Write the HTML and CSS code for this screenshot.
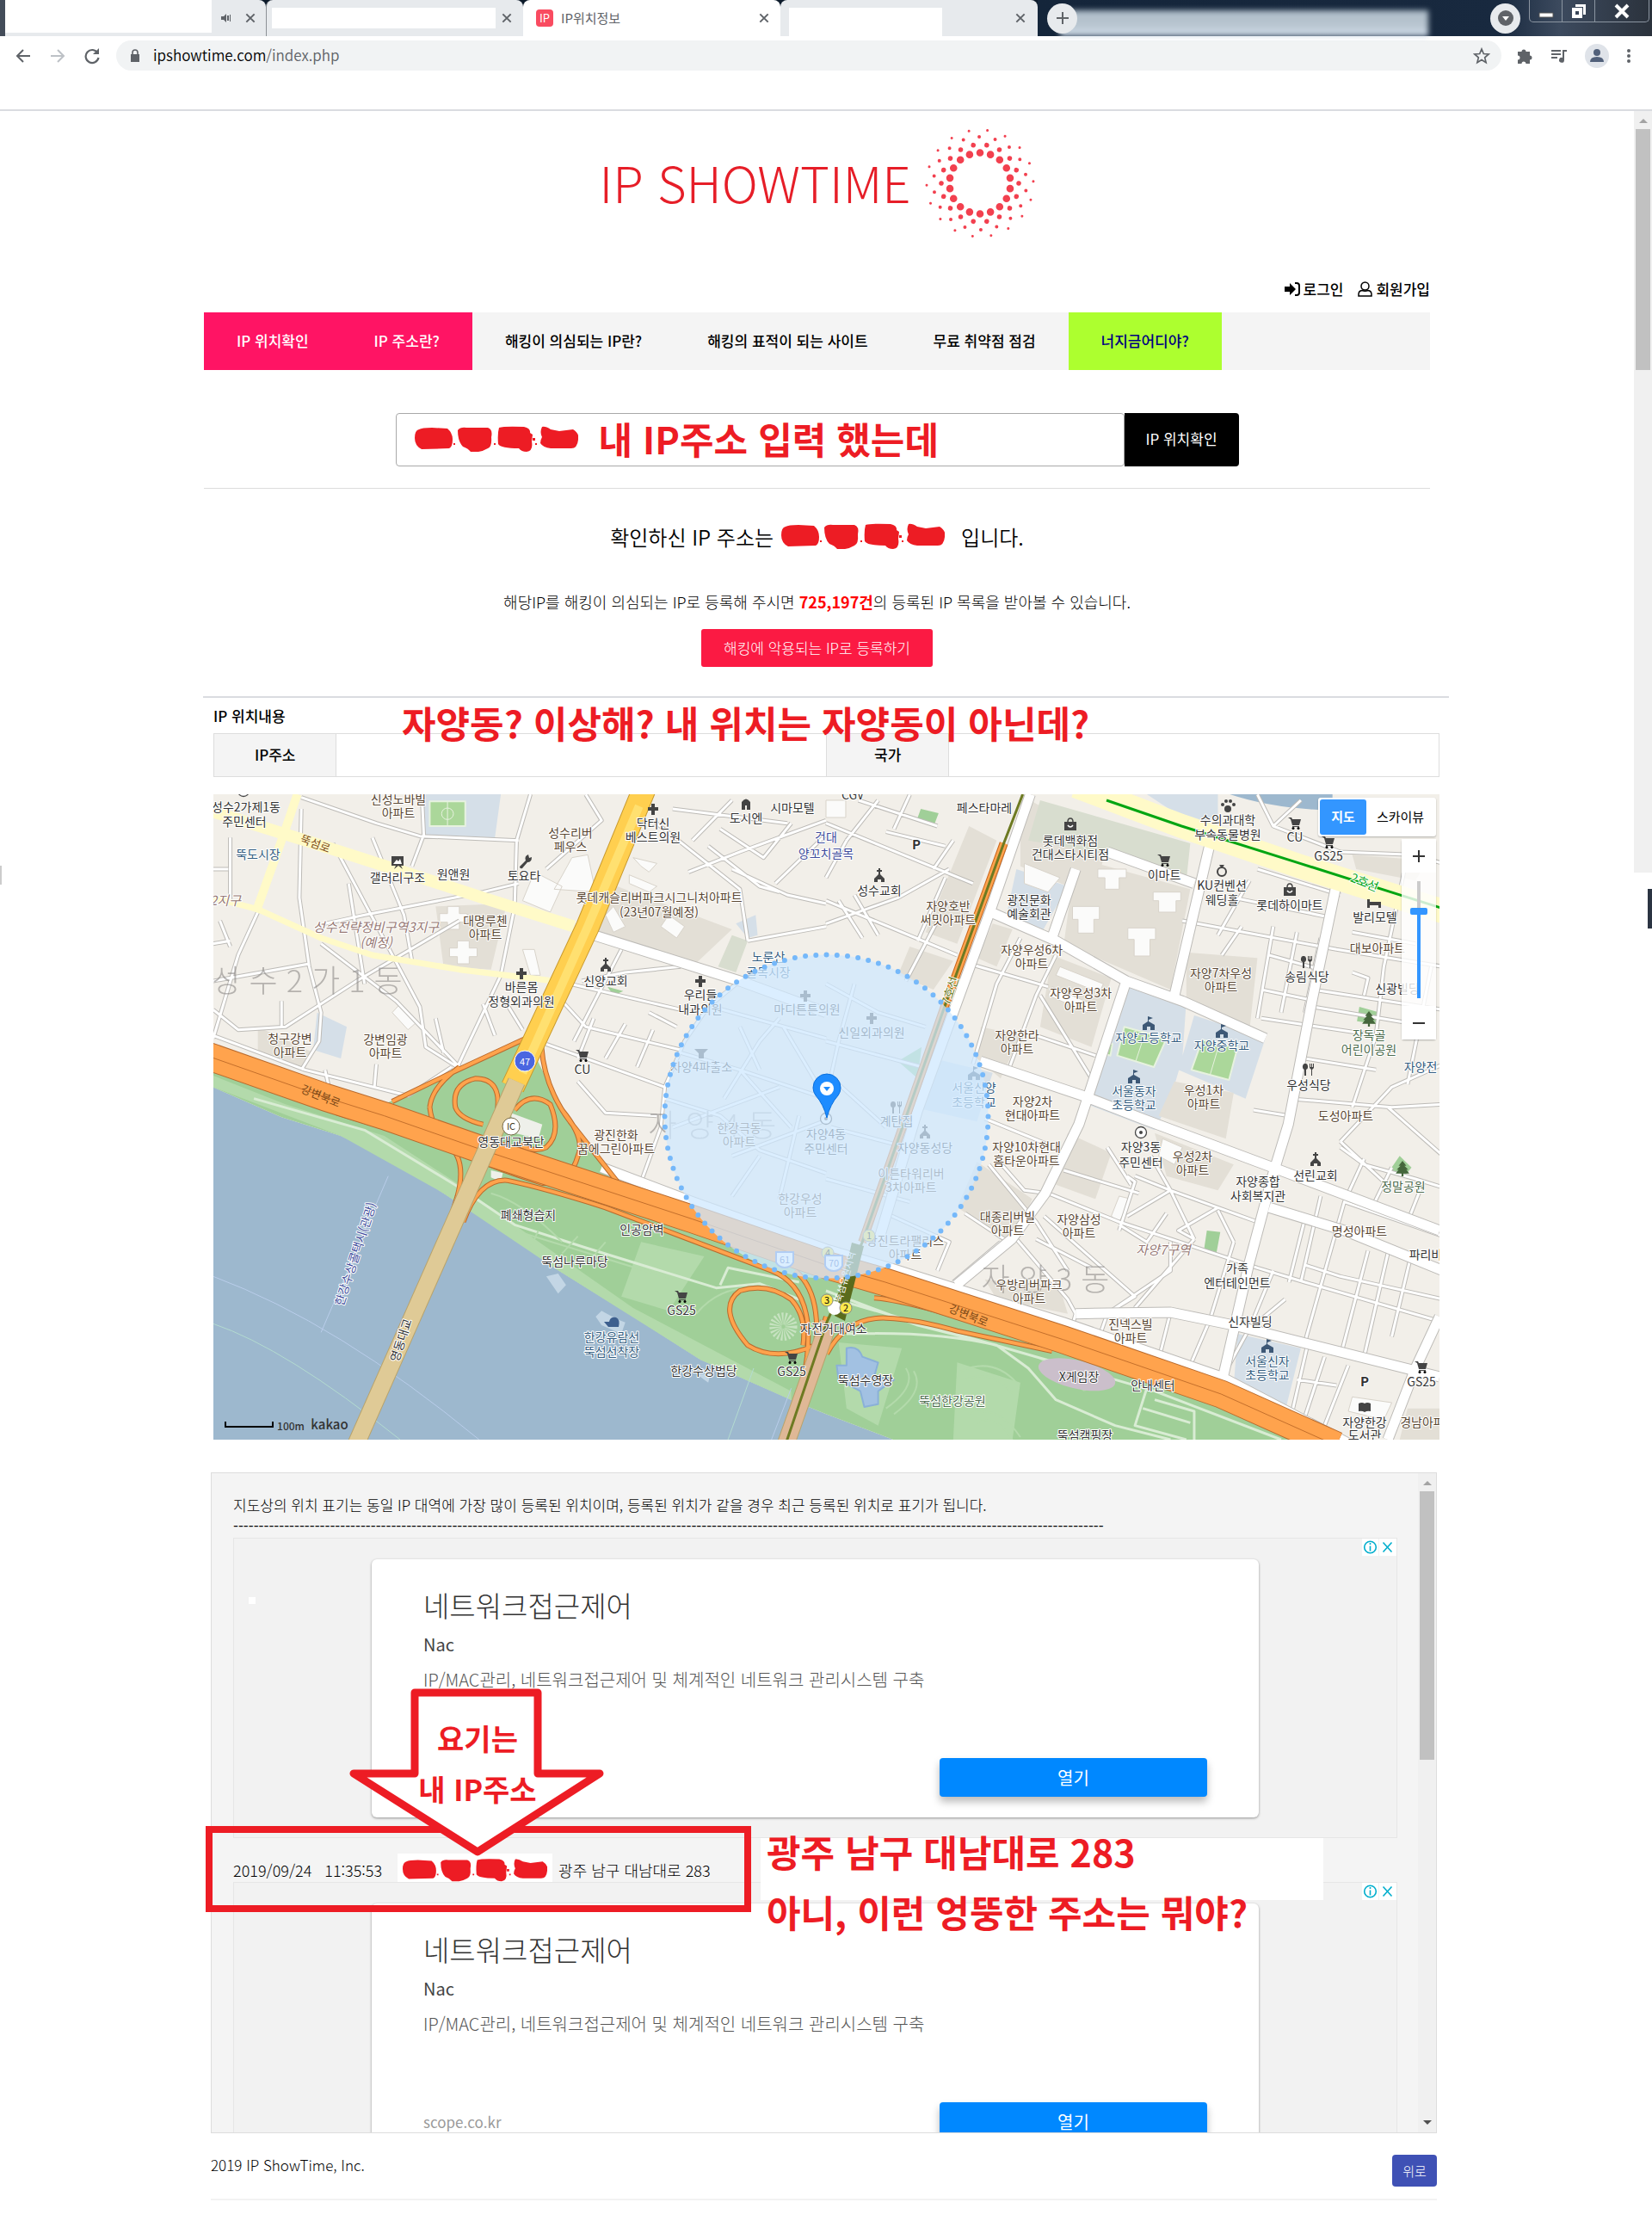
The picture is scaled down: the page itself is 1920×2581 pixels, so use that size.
FILE: index.html
```html
<!DOCTYPE html>
<html lang="ko">
<head>
<meta charset="utf-8">
<title>IP위치정보</title>
<link rel="stylesheet" href="styles.css">
</head>
<body>
<svg class="sprite" aria-hidden="true">
  <defs>
    <symbol id="close" viewBox="0 0 12 12"><path d="M2 2l8 8M10 2l-8 8" stroke="currentColor" stroke-width="1.7" fill="none"/></symbol>
    <symbol id="scribble" viewBox="0 0 190 30">
      <g fill="#ed1c24"><path d="M5 4Q8 2 20 2L38 3Q44 8 44 16T40 26L8 27Q0 23 0 14T5 4z"/><path d="M50 5Q53 1 60 2L85 2Q91 4 89 13Q90 24 85 26Q80 29 74 30L65 30Q62 26 56 24Q50 18 50 5z"/><path d="M98 2Q104 0 127 1Q135 3 134 8L137 10L136 18Q138 29 130 30Q124 30 121 26Q100 26 97 21Q96 9 98 2z"/><path d="M148 1Q152 0 158 4L168 6L184 4Q192 9 190 16Q189 26 182 26L158 26Q149 25 146 20Q146 16 148 13Q145 7 148 1z"/>
      <path d="M45 20h2v2h-2zM92 20h2v2h-2zM140 20h2v2h-2zM137 14h3v3h-3z"/></g>
    </symbol>
    <symbol id="adchoices" viewBox="0 0 40 20"><path fill="#fff" d="M0 0h19v20H0zM20 0h20v20H20z"/><g fill="none" stroke="#00aecd" stroke-width="1.6"><circle cx="9.500" cy="10" r="6.800"/><path d="M9.500 8.500v6M9.500 5v2M24.500 4.500l10 11M34.500 4.500l-10 11"/></g></symbol>
    <symbol id="m-plus" viewBox="-8 -8 16 16"><path d="M-2-6h4v4h4v4h-4v5h-4v-5h-4v-4h4z" fill="currentColor"/></symbol>
    <symbol id="m-cart" viewBox="-8 -8 16 16"><path d="M-8-6h4l1 2h10l-2 7h-8l-2-7zM-3 4h8v1h-8z" fill="currentColor"/><circle cx="-2" cy="6.500" r="1.500"/><circle cx="4" cy="6.500" r="1.500"/></symbol>
    <symbol id="m-church" viewBox="-8 -8 16 16"><path d="M-1-8h2v2h2v2h-2v3l5 5v4h-4v-3h-4v3h-4v-4l5-5v-3h-2v-2h2z" fill="currentColor"/></symbol>
    <symbol id="m-school" viewBox="-8 -8 16 16"><path d="M-1-8l6 2-5 2v2l7 4v6h-5v-4h-4v4h-5v-6l6-4z" fill="currentColor"/></symbol>
    <symbol id="m-tree" viewBox="-8 -8 16 16"><path d="M0-8l4 5h-2l4 4h-2l3 4h-6v3h-2v-3h-6l3-4h-2l4-4h-2z" fill="currentColor"/></symbol>
    <symbol id="m-fork" viewBox="-8 -8 16 16"><path d="M-4-7a2.500 3.500 0 0 1 1 7v7h-2v-7a2.500 3.500 0 0 1 1-7zM1-7h1v4h1v-4h1v4h1v-4h1v5l-2 2v7h-1v-7l-2-2z" fill="currentColor"/></symbol>
    <symbol id="m-bag" viewBox="-8 -8 16 16"><path d="M-7-3h14v10h-14z" fill="currentColor"/><path d="M-3-3q0-4 3-4t3 4" fill="none" stroke="currentColor" stroke-width="1.500"/><path d="M-3 1q3 4 6 0" stroke="#fff" fill="none" stroke-width="1.500"/></symbol>
    <symbol id="m-office" viewBox="-8 -8 16 16"><circle r="6.500" fill="#fff" stroke="currentColor" stroke-width="1.300"/><circle r="2" fill="currentColor"/></symbol>

    <g id="minor-roads">
      <path d="M17 300H55M60 190V410M240 90L235 400 260 640 290 800 285 900 240 1000M240 50L430 140 540 185 790 200M545 39L550 180 520 290M820 39L785 200 780 430 745 670 635 990M320 210L440 520 540 780 555 920 635 990M420 190L500 460 520 620M300 490L400 460 700 380 790 350M130 450L80 600 17 890M17 690L260 630M17 790L80 860 200 850 380 690 640 480M290 560L480 760 640 990M360 350L400 700M190 850L190 760M17 880L250 1000 510 1090 620 990M300 1000L310 1060M430 980L425 1060M860 910L1160 1060M880 730L960 850 1200 930M1050 580L930 900M920 700L1200 790M1350 690L1270 780 1210 900 1160 1060 1150 1200 1100 1390M950 690L1060 660 1200 640M1130 130L1350 370 1370 550M1220 310L1350 240 1568 130M1330 300L1470 390 1568 420M1370 550L1568 500M1440 350L1568 180M960 40L1000 130 860 300M1180 90L1470 140M1230 200L1330 60M1300 160L1410 260 1480 140M1270 220L1400 360 1450 380M940 1040L1010 1150 1140 1160M700 770L730 880M760 770L800 860M580 820L600 940M980 820L940 960M1060 840L1010 960M1130 860L1090 990M1120 800L1190 850M34 480L60 570M17 560L60 550"/>
      <path d="M1620 200L1700 60M1568 140L1940 350M1568 330L1620 200M1568 410L1900 600M1568 490L1750 400 1880 300M1640 390L1700 530M1600 410L1660 540M1800 550L1870 330M1770 690L1850 480M1720 170L1870 220M1840 300L1890 200M1650 60L1850 150M1780 40L1740 160M1930 630L2130 710M2060 540L2000 700 1940 980M2150 600L2100 740 2030 1000M2110 740L2240 1030M2100 880L2250 950M2470 480L2860 580M2640 340L2560 530M2660 300L2870 390M2620 500L2570 600M2700 500L2660 820M2760 520L2720 800M2820 540L2780 800M2600 400L2850 470M2690 600L2820 650M2670 720L2810 760M2670 820L2960 880M2800 780L3100 850M2870 240L3050 250 3130 280M2870 240L2700 150 2660 40M2700 150L2770 60M2860 580L3130 640M2900 520L3060 560M2900 660L2940 680 2930 740M3040 250L2980 640 2960 880 2900 1130M3100 640L3040 1050M2800 720L3130 790M2780 960L2960 1000"/>
      <path d="M2740 1100L3000 1130 3130 1120M2870 1270L2930 1330 3060 1380 3130 1410M2870 1250L3000 1060 3130 980M2870 1250L2980 1390M2990 1130L3130 1300M2740 1160L2650 1140M1970 1170L2130 1260M2000 1310L2070 1420 2130 1430M2170 1350L2360 1430M2330 1370L2350 1390 2310 1560M2350 1370L2440 1420 2560 1480 2660 1530M2390 1300L2440 1420 2500 1590M2330 1510L2440 1420M2310 1540L2380 1600 2430 1500M2500 1590L2460 1560 2560 1480M2050 1590L2180 1800 2200 1850M2120 1510L2350 1790 2290 1840 2200 1850M2100 1590L2240 1690M2200 1850L2290 1840 2440 1700 2440 1600M2500 1590L2350 1830M2280 1850L2260 1930M2440 1845L2410 2010M2540 1870L2490 2030M2600 1600L2540 1870 2700 1920M2200 1850L2190 1900M2130 1430L2310 1530 2660 1690 2780 1740M2560 1490L2600 1600M2700 1700L2640 1900 2560 2100M2780 1520L2740 1740M2820 1440L2770 1740M2880 1460L2780 1950M2940 1630L2870 2000M2990 1640L2930 2000M3050 1640L3000 1930M2780 1680L2870 1720 3130 1800M2780 1740L3130 1880M2660 1880L2730 1800M2790 1940L2750 2180M2830 2000L2780 2210M2890 2030L2830 2240M2760 2080L2860 2100M1980 1330L2100 1530 2180 1700M1720 1500L1880 1600 1850 1700M2280 1270L2340 1400M2010 1600L1890 1740M1920 1500L2030 1600M2930 1310L2880 1460 3130 1580M3000 1340L2950 1480M3080 1390L3040 1530"/>
      <path d="M1200 940L1350 1000 1568 1100M1280 780L1568 890M1310 1100L1400 900 1450 820M1160 1100L1300 1160 1400 1280 1568 1360M1180 1200L1450 1060M1400 1300L1330 1440M1500 1160L1450 1450M1350 1000L1480 1200M1350 850L1400 1000M1460 850L1568 1100M1330 1300L1560 1180M1568 700L1700 800 1820 850M1640 700L1600 900 1568 1100M1568 900L1840 1000M1580 1200L1800 1280M1600 1050L1720 1200M1568 1380L1780 1460"/>
    </g>
    <g id="main-roads">
      <path d="M980 530L1350 690 1568 800M2085 39L1985 440 1890 800 1800 1140 1700 1600M1985 450L2150 550 2328 690 2470 760 2680 890M2540 210L2450 740M1958 970L2218 1090 2368 1170 2718 1350 3121 1560M2328 690L2208 1190 2123 1430 2038 1590 1898 1750M2868 300L2798 760 2738 1190 2698 1370 2638 1680 2568 2100M1000 1340L1230 1460 1568 1625 1728 1690 2168 1880 2568 2070 2888 2300M2200 1850L2440 1845 2600 1890 3121 2070M3121 1860L3060 2040 2990 2289M2140 540L2200 300M2280 240L2500 350M2690 1480L2880 1560 3130 1700"/>
    </g>
    <g id="expressway"><path d="M0 950L300 1095 450 1160 700 1280 1230 1520 1568 1680 1718 1740 2168 1940 2568 2130 2860 2310"/></g>
    <g id="ramps"><path d="M808 890L620 1010 470 1110M848 920Q855 1060 920 1180L1040 1390M735 1150Q750 1030 680 1030Q620 1050 630 1130Q640 1170 700 1190M565 1130Q570 1060 640 990M565 1130Q570 1200 610 1260Q660 1310 635 1440L615 1530M780 1140Q820 1070 870 1120Q900 1220 860 1270Q830 1290 790 1260M900 1140Q960 1240 940 1300Q920 1400 850 1395Q700 1330 640 1280L330 1150M650 1530Q690 1380 760 1385Q850 1410 1010 1480L1430 1700Q1540 1760 1520 2000L1500 2200M1490 1700Q1560 1780 1540 1990L1568 1860M1540 1960Q1440 2020 1370 1960Q1290 1830 1350 1770Q1420 1740 1480 1800Q1520 1860 1510 1960M1570 1990Q1620 1860 1720 1865Q1800 1870 1900 1910L2140 1980M1690 1795Q1740 1800 1850 1840L2140 1960"/></g>
  </defs>
</svg>

<header class="browser">
  <div class="tabs">
    <div class="tab tab-first"><span class="blank"></span>
      <svg width="14" height="14" viewBox="0 0 14 14" fill="#5f6368"><path d="M1 5h3l3-3v10L4 9H1zM8 4h2v6H8zM11 3h1v8h-1z"/></svg>
      <svg class="x" width="14" height="14"><use href="#close"/></svg></div>
    <div class="tab tab-second"><span class="blank"></span><svg class="x" width="14" height="14"><use href="#close"/></svg></div>
    <div class="tab tab-active"><span class="favicon">IP</span><span class="tab-title">IP위치정보</span><svg class="x" width="14" height="14"><use href="#close"/></svg></div>
    <div class="tab tab-last"><span class="blank"></span><svg class="x" width="14" height="14"><use href="#close"/></svg></div>
    <div class="glass">
      <button class="round" aria-label="새 탭"><svg width="16" height="16" viewBox="0 0 16 16"><path d="M8 1v14M1 8h14" stroke="#5f6368" stroke-width="2"/></svg></button>
      <span class="glow"></span>
      <button class="round" aria-label="탭 검색"><svg width="18" height="18" viewBox="0 0 18 18"><circle cx="9" cy="9" r="9" fill="#5f6368"/><path d="M5 7h8l-4 5z" fill="#fff"/></svg></button>
      <div class="window-buttons">
        <button aria-label="최소화"><svg width="20" height="20" viewBox="0 0 20 20"><path d="M2 12h16v5H2z" fill="#fff" stroke="#555"/></svg></button>
        <button aria-label="이전 크기로"><svg width="20" height="20" viewBox="0 0 20 20"><path d="M6 2h12v12h-3V5H6zM2 6h12v12H2zm4 4v4h4v-4z" fill="#fff" fill-rule="evenodd"/></svg></button>
        <button aria-label="닫기"><svg width="20" height="20" viewBox="0 0 20 20"><path d="M3 3l14 14M17 3L3 17" stroke="#fff" stroke-width="4"/></svg></button>
      </div>
    </div>
  </div>
  <div class="toolbar">
    <svg width="20" height="20" viewBox="0 0 20 20" fill="none" stroke="#5f6368" stroke-width="2"><path d="M18 10H3M10 3l-7 7 7 7"/></svg>
    <svg width="20" height="20" viewBox="0 0 20 20" fill="none" stroke="#bdc1c6" stroke-width="2"><path d="M2 10h15M10 3l7 7-7 7"/></svg>
    <svg width="20" height="20" viewBox="0 0 20 20" fill="none" stroke="#5f6368" stroke-width="2.200"><path d="M16.500 6.500A7.500 7.500 0 1 0 17.500 12"/><path d="M18 1v7h-7z" fill="#5f6368" stroke="none"/></svg>
    <div class="omnibox">
      <svg width="12" height="16" viewBox="0 0 12 16"><path d="M1 6h10v9H1z" fill="#5f6368"/><path d="M3 7V4a3 3 0 0 1 6 0v3" fill="none" stroke="#5f6368" stroke-width="1.600"/></svg>
      <span class="url">ipshowtime.com<span>/index.php</span></span>
      <svg width="20" height="20" viewBox="0 0 20 20"><path d="M10 2l2.300 5.500 5.900.5-4.500 3.900 1.400 5.800L10 14.600l-5.100 3.100 1.400-5.800L1.800 8l5.900-.5z" fill="none" stroke="#5f6368" stroke-width="1.700"/></svg>
    </div>
    <svg width="20" height="20" viewBox="0 0 20 20" fill="#5f6368"><path d="M2 5h4.500a2.500 2.500 0 1 1 5 0H16v4.500a2.500 2.500 0 1 1 0 5V19h-4.500a2.500 2.500 0 0 0-5 0H2v-4.500a2.500 2.500 0 0 0 0-5z"/></svg>
    <svg width="20" height="20" viewBox="0 0 20 20" fill="#5f6368"><path d="M1 3h11v2H1zM1 7h11v2H1zM1 11h7v2H1zM14 3h5v2h-3v10a3 3 0 1 1-2-3z"/></svg>
    <svg width="28" height="28" viewBox="0 0 28 28"><circle cx="14" cy="14" r="14" fill="#dfe3e9"/><circle cx="14" cy="10" r="4" fill="#51607a"/><path d="M6 21q0-6 8-6t8 6z" fill="#51607a"/></svg>
    <svg width="6" height="18" viewBox="0 0 6 18" fill="#5f6368"><circle cx="3" cy="3" r="2"/><circle cx="3" cy="9" r="2"/><circle cx="3" cy="15" r="2"/></svg>
  </div>
</header>

<div class="viewport">
<main class="page">
  <h1 class="logo"><span>IP SHOWTIME</span>
    <svg width="128" height="128" viewBox="-64 -64 128 128" fill="none" stroke="#f2404f" stroke-linecap="round" aria-hidden="true">
      <circle r="35.500" pathLength="180" stroke-width="8.600" stroke-dasharray="0 10" transform="rotate(-90)"/>
      <circle r="45" pathLength="180" stroke-width="5.600" stroke-dasharray="0 10" transform="rotate(-80)"/>
      <circle r="54" pathLength="180" stroke-width="4" stroke-dasharray="0 10" transform="rotate(-91)"/>
      <circle r="62" pathLength="180" stroke-width="3" stroke-dasharray="0 10" transform="rotate(-82)"/>
    </svg>
  </h1>
  <div class="account">
    <a href="#"><svg width="18" height="16" viewBox="0 0 18 16"><path d="M0 5h6V1l7 7-7 7v-4H0z"/><path d="M12 1h2q3 0 3 3v8q0 3-3 3h-2" fill="none" stroke="#000" stroke-width="2"/></svg>로그인</a>
    <a href="#"><svg width="17" height="18" viewBox="0 0 17 18" fill="none" stroke="#000" stroke-width="1.500"><circle cx="8.500" cy="5.500" r="4.500"/><path d="M1 17v-2q0-4 4-4.500 3.500 1.500 7 0 4 .5 4 4.500v2z"/></svg>회원가입</a>
  </div>
  <nav class="menu">
    <a class="pink" href="#">IP 위치확인</a><a class="pink" href="#">IP 주소란?</a><a href="#">해킹이 의심되는 IP란?</a><a href="#">해킹의 표적이 되는 사이트</a><a href="#">무료 취약점 점검</a><a class="green" href="#">너지금어디야?</a>
  </nav>
  <form class="search">
    <input type="text" aria-label="IP 주소">
    <button type="button">IP 위치확인</button>
    <div class="search-note"><svg class="scribble"><use href="#scribble"/></svg><span class="note">내 IP주소 입력 했는데</span></div>
  </form>
  <section class="result">
    <h2>확인하신 IP 주소는 <svg class="scribble"><use href="#scribble"/></svg> 입니다.</h2>
    <p>해당IP를 해킹이 의심되는 IP로 등록해 주시면 <strong>725,197건</strong>의 등록된 IP 목록을 받아볼 수 있습니다.</p>
    <button type="button">해킹에 악용되는 IP로 등록하기</button>
  </section>
  <section class="location">
    <h3>IP 위치내용</h3>
    <span class="note location-note">자양동? 이상해? 내 위치는 자양동이 아닌데?</span>
    <table><tr><th scope="row">IP주소</th><td></td><th scope="row">국가</th><td></td></tr></table>
    <div class="map">
      <svg class="map-art" viewBox="0 0 1425 750" role="img" aria-label="자양동 지도">
        <rect width="1425" height="750" fill="#f2efe9"/>
        <g class="geo" transform="translate(-8 -13) scale(.45918 .33333)">
          <path fill="#d5dfe8" d="M545 39H745L730 190 550 180zM2380 39L2560 39 2560 130 2480 130zM2050 300L2180 360 2110 530 2020 490zM2320 700L2480 760 2470 960 2440 1100 2400 1210 2230 1120zM2500 810L2680 890 2630 1100 2460 1000zM2610 1920L2770 1970 2730 2190 2600 2100zM280 800L355 850 340 960 270 930zM1340 490L1390 460 1395 530 1370 540zM1840 960L1990 1010 1950 1180 1790 1130z"/>
          <path fill="#9db8ce" d="M2590 39H2850V95Q2700 90 2590 39z"/>
          <path fill="#e3dfd6" d="M1000 340L1330 510 1230 640 990 530zM580 430L760 420 720 650 600 640zM130 850L270 940 240 1000 130 940zM2200 260L2490 370 2440 720 2170 560zM1930 150L2000 200 1900 560 1820 520zM2140 600L2290 680 2240 920 2110 850zM2480 590L2660 610 2640 860 2480 780zM2450 1040L2600 1080 2580 1240 2410 1160zM2180 1220L2290 1290 2250 1450 2150 1400zM1950 1320L2090 1450 2040 1600 1900 1480zM2400 1220L2600 1330 2560 1420 2430 1370zM1970 1730L2160 1760 2180 1850 2000 1800zM1960 850L2060 880 2010 1030 1950 960zM2900 250L3090 270 3060 340 2910 300zM3040 2180H3130V2289H3020zM1990 490L2040 510 2000 640 1950 610zM1780 570L1890 620 1840 720 1750 670zM2060 39L2110 80 2290 150 2260 320 2180 360 2060 290z"/>
          <path fill="#d8ddcf" d="M2110 60L2490 210 2480 340 2290 250 2080 200zM1330 530L1370 550 1340 660 1295 640z"/>
          <path fill="#fbfbfa" stroke="#d8d3ca" stroke-width="1" vector-effect="non-scaling-stroke" d="M2256 300h72v30h-18v40h-36v-40h-18zM2396 380h70v30h-12v40h-44v-40h-14zM2192 430h68v45h-14v48h-40v-48h-14zM2332 505h70v40h-14v58h-40v-58h-16zM925 260L965 250 985 380 880 370 895 335zM830 310L900 360 870 450 800 410zM490 770L535 830 510 860 470 800zM1080 260L1140 280 1120 310 1100 290zM1070 320L1140 360 1120 380 1070 350zM800 580L830 580 845 670 820 670zM2070 280L2160 330 2130 380 2070 350zM1568 60h50v60h-50zM2900 2140L3000 2160 2980 2220 2890 2190zM610 430h30v25h20v30h-20v25h-30v-25h-20v-30h20zM635 550h30v25h20v30h-20v25h-30v-25h-20v-30h20zM1170 460L1210 500 1190 540 1150 500zM1030 430L1060 500 1030 520 1010 460zM2160 640L2270 700 2260 730 2150 670zM2140 710L2240 770 2230 800 2130 740zM2420 1240L2470 1270 2450 1330 2410 1300zM2310 1440L2340 1450 2310 1530 2290 1510z"/>
          <path fill="#abd79a" stroke="#e7f2df" stroke-width="2" vector-effect="non-scaling-stroke" d="M565 64H655V150H565zM2323 850L2430 890 2398 990 2305 950zM2520 895L2610 920 2588 1035 2493 1000zM2278 905l15 5-5 40-13-5z"/>
          <path fill="none" stroke="#e7f2df" stroke-width="1" vector-effect="non-scaling-stroke" d="M610 64V150M595 107a15 20 0 1 0 30 0a15 20 0 1 0-30 0M2376 870L2352 970M2564 907L2540 1018"/>
          <path fill="#a0cf98" d="M1808 90L1853 105 1840 152 1797 132zM2918 780L2970 800 2960 840 2912 830zM2532 1560L2566 1565 2556 1640 2525 1625zM3020 1300L3050 1340 3030 1375 2990 1360zM1015 710L1055 725 1030 740zM1750 970L1810 920 1800 1030z"/>
          <path fill="#9db8ce" d="M0 1050L190 1165 340 1230 480 1320 600 1430 780 1590 880 1690 1080 1860 1250 2010 1480 2150 1568 2200 1740 2290V2400H0z"/>
          <path fill="#a0cf98" d="M0 980L450 1160 700 1280 1230 1520 1718 1740 2168 1940 2568 2130 2818 2289V2400H1740V2290L1568 2200 1480 2150 1250 2010 1080 1860 880 1690 780 1590 600 1430 480 1320 340 1230 190 1165 0 1050zM808 885L900 1140 1040 1380 750 1290 450 1120z"/>
          <path fill="#b3daab" d="M17 1020L200 1120 450 1230 640 1400 800 1560 1080 1830 1480 2120 1480 2150 1250 2010 880 1690 600 1430 340 1230 17 1060zM1100 1600L1260 1650 1170 1840 1050 1790zM1600 1950L1760 1970 1700 2240 1620 2180zM1900 2020L2060 2090 2040 2289H1890zM2100 2000L2300 2090 2220 2120z"/>
          <path fill="#eef0ea" d="M770 1150L850 1190 840 1240 780 1220zM720 1350L750 1360 745 1390 720 1375z"/>
          <path fill="#c3d6e5" d="M860 1720L890 1710 910 1750 890 1780zM985 1860L1000 1840 1040 1870 1060 1880 1050 1920 1000 1890zM1240 2060L1275 2060 1270 2090z"/>
          <g class="path-green"><path d="M120 1100L400 1210 640 1410 780 1540 960 1620 1290 1760 1400 1745 1500 1800M1300 1750L1320 1690 1500 1740M1568 1770L1800 1890 2000 1960 2080 2040 2150 2150 2300 2240 2440 2289M1620 1920Q1850 1910 2000 1960M1568 1790L2200 2040 2400 2120 2720 2289M2380 2110L2350 2240 2480 2289M2400 2150L2500 2190 2500 2289M2370 2180L2490 2230"/></g>
          <path fill="none" stroke="#b3daab" stroke-width="2" vector-effect="non-scaling-stroke" d="M720 1430Q800 1460 900 1600M780 1560L1180 1730M820 1620L840 1560M900 1640L940 1580M960 1680L1010 1600M1240 1850Q1300 1750 1400 1760M1910 2050Q1990 2000 2050 2090M1920 2080Q1990 2040 2040 2130M1930 2200Q2000 2160 2060 2280M1950 2230Q2000 2200 2040 2289M1720 2180Q1800 2100 1770 2040M1740 2200Q1820 2120 1790 2050"/>
          <ellipse cx="1460" cy="1895" rx="20" ry="28" fill="none" stroke="#c8e3c2" stroke-width="14" stroke-dasharray="1.500 1.500" vector-effect="non-scaling-stroke"/>
          <path fill="#a2c1e2" stroke="#8ab0d8" stroke-width="2" vector-effect="non-scaling-stroke" d="M1620 1970Q1650 1960 1660 2000L1700 2020 1690 2070 1740 2080 1720 2100 1700 2120 1700 2165 1665 2175 1655 2120 1600 2080 1595 2030 1620 2030z"/>
          <ellipse cx="2203" cy="2062" rx="102" ry="48" transform="rotate(20 2203 2062)" fill="#cbbfcb"/>
          <path fill="none" stroke="#b9cdea" stroke-width="1" vector-effect="non-scaling-stroke" d="M17 1720Q330 1880 690 2289M460 1370L290 1915M1480 2110L1430 2289"/>
          <path fill="none" stroke="#b3dbd0" stroke-width="1" vector-effect="non-scaling-stroke" d="M17 1885Q200 1970 490 2289M1385 2040L1320 2289"/>
          <use class="minor-case" href="#minor-roads"/><use class="minor-fill" href="#minor-roads"/>
          <use class="main-case" href="#main-roads"/><use class="main-fill" href="#main-roads"/>
          <path class="yl w14" d="M17 100L250 200 500 310 700 400 930 500"/>
          <path class="yl w10" d="M230 39L190 200 125 450"/>
          <path class="yl w7" d="M17 400L130 440 290 540 420 600 640 650 880 690"/>
          <path class="yl w28" d="M2200 10L2468 150 2768 290 3136 450"/>
          <path fill="none" stroke="#00a512" stroke-width="3" vector-effect="non-scaling-stroke" d="M2278 60L2468 150 2768 280 3136 440"/>
          <use class="ramp-case" href="#ramps"/><use class="ramp-fill" href="#ramps"/>
          <use class="exp-case" href="#expressway"/><use class="exp-fill" href="#expressway"/><use class="exp-line" href="#expressway"/>
          <path class="h47-case" d="M1108 20L965 500 775 1060"/><path class="h47" d="M1108 20L965 500 775 1060"/><path class="h47-mid" d="M1095 80L965 500 800 1010"/>
          <path class="bridge-case" d="M785 1040L377 2310"/><path class="bridge" d="M785 1040L377 2310"/>
          <path class="bridge-case" d="M1575 1880L1465 2310"/><path class="bridge line7" d="M1575 1880L1465 2310"/>
          <path fill="none" stroke="#c9651a" stroke-width="10" vector-effect="non-scaling-stroke" d="M2018 210L1868 780 1660 1600"/>
          <path fill="none" stroke="#ffa34d" stroke-width="8" vector-effect="non-scaling-stroke" d="M2018 210L1868 780 1660 1600"/>
          <path fill="none" stroke="#6d7a22" stroke-width="3" vector-effect="non-scaling-stroke" d="M2066 39L2018 210 1868 780 1660 1600 1570 1880 1467 2300"/>
        </g>
        <g class="district"><text x="109" y="230">성 수 2 가 1 동</text><text x="580" y="398">자 양 4 동</text><text x="967" y="577">자 양 3 동</text></g>
        <g class="apt">
          <text x="215" y="11">신성노바빌<tspan x="215" dy="16">아파트</tspan></text><text x="415" y="50">성수리버<tspan x="415" dy="16">페우스</tspan></text>
          <text x="518" y="125">롯데캐슬리버파크시그니처아파트<tspan x="518" dy="17">(23년07월예정)</tspan></text><text x="316" y="152">대명루첸<tspan x="316" dy="16">아파트</tspan></text>
          <text x="89" y="289">청구강변<tspan x="89" dy="16">아파트</tspan></text><text x="200" y="290">강변임광<tspan x="200" dy="16">아파트</tspan></text>
          <text x="611" y="393">한강극동<tspan x="611" dy="16">아파트</tspan></text><text x="468" y="401">광진한화<tspan x="468" dy="16">꿈에그린아파트</tspan></text>
          <text x="682" y="475">한강우성<tspan x="682" dy="16">아파트</tspan></text><text x="854" y="135">자양호반<tspan x="854" dy="16">써밋아파트</tspan></text>
          <text x="1353" y="184">대보아파트</text><text x="1171" y="213">자양7차우성<tspan x="1171" dy="16">아파트</tspan></text>
          <text x="951" y="186">자양우성6차<tspan x="951" dy="16">아파트</tspan></text><text x="1008" y="236">자양우성3차<tspan x="1008" dy="16">아파트</tspan></text>
          <text x="934" y="285">자양한라<tspan x="934" dy="16">아파트</tspan></text><text x="952" y="362">자양2차<tspan x="952" dy="16">현대아파트</tspan></text>
          <text x="1151" y="349">우성1차<tspan x="1151" dy="16">아파트</tspan></text><text x="1316" y="379">도성아파트</text>
          <text x="945" y="415">자양10차현대<tspan x="945" dy="16">홈타운아파트</tspan></text><text x="1138" y="426">우성2차<tspan x="1138" dy="16">아파트</tspan></text>
          <text x="811" y="446">이튼타워리버<tspan x="811" dy="16">3차아파트</tspan></text><text x="1332" y="513">명성아파트</text>
          <text x="923" y="496">대종리버빌<tspan x="923" dy="16">아파트</tspan></text><text x="1006" y="499">자양삼성<tspan x="1006" dy="16">아파트</tspan></text>
          <text x="804" y="524">광진트라팰리스<tspan x="804" dy="16">아파트</tspan></text><text x="948" y="575">우방리버파크<tspan x="948" dy="16">아파트</tspan></text>
          <text x="1066" y="621">진넥스빌<tspan x="1066" dy="16">아파트</tspan></text><text x="1405" y="735">경남아파</text>
        </g>
        <g class="poi">
          <text x="38" y="20">성수2가제1동<tspan x="36" dy="17">주민센터</tspan></text><text x="214" y="102">갤러리구조</text><text x="279" y="98">원앤원</text><text x="361" y="100">토요타</text>
          <text x="511" y="39">닥터신<tspan x="511" dy="16">베스트의원</tspan></text><text x="619" y="33">도시엔</text><text x="673" y="21">시마모텔</text>
          <text x="358" y="229">바른몸<tspan x="358" dy="17">정형외과의원</tspan></text><text x="456" y="222">신양교회</text><text x="566" y="238">우리들<tspan x="566" dy="17">내과의원</tspan></text>
          <text x="429" y="325">CU</text><text x="567" y="322">자양4파출소</text><text x="690" y="255">마디튼튼의원</text><text x="712" y="400">자양4동<tspan x="712" dy="17">주민센터</tspan></text>
          <text x="765" y="282">신일외과의원</text><text x="743" y="6">CGV</text><text x="896" y="21">페스타마레</text><text x="817" y="64" class="strong">P</text><text x="774" y="117">성수교회</text>
          <text x="996" y="59">롯데백화점<tspan x="996" dy="16">건대스타시티점</tspan></text><text x="948" y="128">광진문화<tspan x="948" dy="16">예술회관</tspan></text><text x="1105" y="99">이마트</text>
          <text x="1179" y="35">수의과대학<tspan x="1179" dy="17">부속동물병원</tspan></text><text x="1257" y="55">CU</text><text x="1296" y="77">GS25</text><text x="1172" y="111">KU컨벤션<tspan x="1172" dy="17">웨딩홀</tspan></text>
          <text x="1251" y="134">롯데하이마트</text><text x="1350" y="148">발리모텔</text><text x="1271" y="217">송림식당</text><text x="1376" y="231">신광빌딩</text><text x="1273" y="343">우성식당</text><text x="794" y="385">계탄집</text>
          <text x="1078" y="415">자양3동<tspan x="1078" dy="18">주민센터</tspan></text><text x="827" y="416">자양동성당</text><text x="1214" y="455">자양종합<tspan x="1214" dy="17">사회복지관</tspan></text><text x="1281" y="448">선린교회</text>
          <text x="1409" y="540">파리바</text><text x="1190" y="556">가족<tspan x="1190" dy="17">엔터테인먼트</tspan></text><text x="1205" y="618">신자빌딩</text><text x="1338" y="688" class="strong">P</text><text x="1404" y="688">GS25</text>
          <text x="1338" y="735">자양한강<tspan x="1338" dy="15">도서관</tspan></text><text x="1092" y="692">안내센터</text><text x="1006" y="682">X게임장</text><text x="758" y="686">뚝섬수영장</text><text x="1013" y="750">뚝섬캠핑장</text>
          <text x="721" y="626">자전거대여소</text><text x="346" y="409">영동대교북단</text><text x="366" y="494">폐쇄형습지</text><text x="498" y="511">인공암벽</text><text x="420" y="548">뚝섬나루마당</text>
          <text x="544" y="605">GS25</text><text x="570" y="675">한강수상법당</text><text x="672" y="676">GS25</text>
        </g>
        <g class="park"><text x="1343" y="285">장독골<tspan x="1343" dy="17">어린이공원</tspan></text><text x="1383" y="461">정말공원</text><text x="859" y="710">뚝섬한강공원</text></g>
        <g class="blue"><text x="52" y="75">뚝도시장</text><text x="645" y="194">노룬산<tspan x="645" dy="18">골목시장</tspan></text><text x="1403" y="322">자양전</text><text x="1087" y="288">자양고등학교</text><text x="1172" y="297">자양중학교</text><text x="884" y="346">서울신양<tspan x="884" dy="17">초등학교</tspan></text><text x="1070" y="350">서울동자<tspan x="1070" dy="16">초등학교</tspan></text><text x="1225" y="664">서울신자<tspan x="1225" dy="16">초등학교</tspan></text><text x="463" y="636">한강유람선<tspan x="463" dy="17">뚝섬선착장</tspan></text></g>
        <g class="indigo"><text x="712" y="55">건대<tspan x="712" dy="19">양꼬치골목</tspan></text><text transform="translate(170 536) rotate(-72)">한강수상콜택시(관광)</text></g>
        <g class="zone"><text x="14" y="129">2지구</text><text x="189" y="160">성수전략정비구역3지구<tspan x="189" dy="18">(예정)</tspan></text><text x="1104" y="535">자양7구역</text></g>
        <g class="roadname"><text transform="translate(117 62) rotate(20)">뚝섬로</text><text transform="translate(123 355) rotate(22)">강변북로</text><text transform="translate(876 610) rotate(22)">강변북로</text></g>
        <g class="poi"><text transform="translate(223 636) rotate(-72)">영동대교</text></g>
        <g class="line2"><text transform="translate(1336 107) rotate(22)">2호선</text></g><g class="line7-name"><text transform="translate(861 230) rotate(-72)">7호선</text></g>
        <g color="#444">
          <use href="#m-plus" x="503" y="9" width="16" height="16"/><use href="#m-plus" x="350" y="200" width="16" height="16"/><use href="#m-plus" x="558" y="209" width="16" height="16"/><use href="#m-plus" x="680" y="226" width="16" height="16"/><use href="#m-plus" x="757" y="252" width="16" height="16"/>
          <use href="#m-church" x="448" y="190" width="16" height="16"/><use href="#m-church" x="766" y="86" width="16" height="16"/><use href="#m-church" x="819" y="384" width="16" height="16"/><use href="#m-church" x="1273" y="416" width="16" height="16"/>
          <use href="#m-cart" x="421" y="295" width="16" height="16"/><use href="#m-cart" x="1097" y="68" width="16" height="16"/><use href="#m-cart" x="1249" y="25" width="16" height="16"/><use href="#m-cart" x="1288" y="47" width="16" height="16"/><use href="#m-cart" x="1396" y="657" width="16" height="16"/><use href="#m-cart" x="536" y="575" width="16" height="16"/><use href="#m-cart" x="664" y="646" width="16" height="16"/>
          <use href="#m-bag" x="988" y="27" width="16" height="16"/><use href="#m-bag" x="1243" y="103" width="16" height="16"/>
          <use href="#m-fork" x="1263" y="187" width="16" height="16"/><use href="#m-fork" x="1265" y="312" width="16" height="16"/><use href="#m-fork" x="786" y="356" width="16" height="16"/>
          <use href="#m-office" x="1070" y="385" width="16" height="16"/><use href="#m-office" x="704" y="369" width="16" height="16"/><use href="#m-office" x="27" y="-12" width="16" height="16"/>
          <path fill="#444" d="M207 72h14v11h-3l2 4-5-4-5 4 2-4h-5z"/><path fill="#fff" d="M209 81l4-5 2 2 2-3 2 6z"/><path d="M356 84l7-7q-2-5 3-7l1 4 3-1q0 6-5 6l-6 7q-3 1-3-2z" fill="#444"/><path d="M614 18v-9q5-7 10 0v9h-4v-5h-2v5z" fill="#444"/><path d="M1341 122h3v3h13v7h-3v-3h-10v3h-3z" fill="#444"/>
          <circle cx="1172" cy="90" r="5" fill="none" stroke="#444" stroke-width="2"/><path d="M1169 82h6l-3 4zM1331 708q4-2 7 0 3-2 7 0v9q-4-1-7 1-3-2-7-1zM559 296h16l-5 5v6h-6v-6z" fill="#444"/>
          <g fill="#444"><circle cx="1179" cy="17" r="4"/><circle cx="1173" cy="12" r="2"/><circle cx="1177" cy="8" r="2"/><circle cx="1182" cy="8" r="2"/><circle cx="1186" cy="12" r="2"/></g>
        </g>
        <g color="#3d5876"><use href="#m-school" x="1079" y="258" width="16" height="16"/><use href="#m-school" x="1164" y="267" width="16" height="16"/><use href="#m-school" x="876" y="316" width="16" height="16"/><use href="#m-school" x="1062" y="320" width="16" height="16"/><use href="#m-school" x="1217" y="633" width="16" height="16"/><path fill="#3d5f8e" d="M454 613h6q1-6 8-5 5 2 3 11h-12z"/></g>
        <g color="#45663c"><use href="#m-tree" x="1334" y="252" width="18" height="18"/><use href="#m-tree" x="1373" y="426" width="18" height="18"/></g>
        <g class="badge"><circle cx="362" cy="310" r="12" fill="#4a66e0" stroke="#fff"/><text x="362" y="315" fill="#fff">47</text><circle cx="346" cy="386" r="10" fill="#fff" stroke="#776a4a"/><text x="346" y="390" fill="#443c22">IC</text>
          <path fill="#5a6b1c" d="M722 606l20-85 14 4-22 87z"/><text transform="translate(738 562) rotate(-74)" fill="#fff">뚝섬유원지역</text><circle cx="722" cy="597" r="8" fill="#fff"/>
          <g fill="#ffe94d" stroke="#888"><circle cx="713" cy="588" r="7"/><circle cx="735" cy="597" r="7"/><circle cx="762" cy="513" r="7"/><circle cx="714" cy="533" r="7"/></g><text x="713" y="592">3</text><text x="735" y="601">2</text><text x="762" y="517">1</text><text x="714" y="537">4</text>
          <path d="M654 532h20v12q-3 6-10 6t-10-6zM711 536h20v12q-3 6-10 6t-10-6z" fill="#fff" stroke="#5c7fd0" stroke-width="2"/><text x="664" y="545" fill="#3a5ab0">61</text><text x="721" y="549" fill="#3a5ab0">70</text></g>
        <circle cx="712.500" cy="374.500" r="188" fill="#cfe8ff" fill-opacity=".74" stroke="#75b8fa" stroke-width="6" stroke-linecap="round" stroke-dasharray="0 12.300"/>
        <path d="M713 376Q709 360 700 350Q697 346 697 341A16 16 0 0 1 729 341Q729 346 726 350Q717 360 713 376z" fill="#1e8cff" stroke="#0a70dd"/><circle cx="713" cy="342" r="8" fill="#fff"/><path d="M709 340h8l-4 5z" fill="#1e8cff"/>
        <path d="M14 729v6h55v-6" fill="none" stroke="#000" stroke-width="2"/>
        <g class="scale"><text x="90" y="739">100m</text><text x="135" y="738" class="kakao">kakao</text></g>
      </svg>
      <div class="map-type"><button class="on" type="button">지도</button><button type="button">스카이뷰</button></div>
      <div class="map-zoom"><button type="button" aria-label="확대"><svg width="16" height="16"><path d="M8 1v14M1 8h14" stroke="#333" stroke-width="2"/></svg></button><input type="range" min="0" max="100" value="76" aria-label="지도 확대 수준"><button type="button" aria-label="축소"><svg width="16" height="16"><path d="M1 8h14" stroke="#333" stroke-width="2"/></svg></button></div>
    </div>
  </section>

  <section class="history">
    <div class="log">
      <p class="log-text">지도상의 위치 표기는 동일 IP 대역에 가장 많이 등록된 위치이며, 등록된 위치가 같을 경우 최근 등록된 위치로 표기가 됩니다.</p>
      <p class="log-text rule">---------------------------------------------------------------------------------------------------------------------------------------------------------------------------</p>
      <article class="ad"><span class="speck"></span><svg class="adchoices" width="40" height="20"><use href="#adchoices"/></svg>
        <div class="card"><h4>네트워크접근제어</h4><p class="brand">Nac</p><p class="desc">IP/MAC관리, 네트워크접근제어 및 체계적인 네트워크 관리시스템 구축</p><div class="card-foot"><span></span><button type="button">열기</button></div></div>
      </article>
      <p class="entry"><span>2019/09/24</span><span>11:35:53</span><span class="masked"><svg class="scribble"><use href="#scribble"/></svg></span><span>광주 남구 대남대로 283</span></p>
      <article class="ad"><svg class="adchoices" width="40" height="20"><use href="#adchoices"/></svg>
        <div class="card"><h4>네트워크접근제어</h4><p class="brand">Nac</p><p class="desc">IP/MAC관리, 네트워크접근제어 및 체계적인 네트워크 관리시스템 구축</p><div class="card-foot"><span>scope.co.kr</span><button type="button">열기</button></div></div>
      </article>
    </div>
    <div class="bar log-bar"><i class="up"></i><b></b><i class="down"></i></div>
    <div class="highlight"></div>
    <div class="arrow">
      <svg width="300" height="206" viewBox="0 0 300 206"><path d="M77 9H220V103H292L150 194 6 103H77z" fill="#fff" stroke="#ed1c24" stroke-width="9" stroke-linejoin="round"/></svg>
      <p>요기는</p><p>내 IP주소</p>
    </div>
    <div class="callout"><p>광주 남구 대남대로 283</p><p>아니, 이런 엉뚱한 주소는 뭐야?</p></div>
  </section>
  <footer><span>2019 IP ShowTime, Inc.</span><button type="button">위로</button></footer>
</main>
<div class="bar page-bar"><i class="up"></i><b></b></div>
<span class="edge edge-left"></span><span class="edge edge-right"></span>
</div>
</body>
</html>
```
FILE: styles.css
```css
* { box-sizing: border-box; }
body { margin: 0; background: #fff; color: #000; font-family: "Noto Sans CJK KR", "Noto Sans", sans-serif; font-size: 17px; line-height: 24px; }
h1, h2, h3, h4, p { margin: 0; font-size: inherit; font-weight: inherit; }
button, input { font: inherit; border: 0; padding: 0; margin: 0; }
a { color: inherit; text-decoration: none; }
svg { flex: none; display: block; }
.sprite { position: absolute; width: 0; height: 0; }

/* browser window */
.tabs { display: flex; height: 42px; background: #0c1a2a; }
.tab { display: flex; align-items: center; background: #e7eaed; border-radius: 8px 8px 0 0; color: #5f6368; }
.tab .blank { background: #fff; }
.tab-first { width: 309px; border-left: 6px solid #434c59; border-radius: 0 8px 0 0; align-items: flex-start; }
.tab-first .blank { width: 240px; height: 38px; margin-right: 10px; }
.tab-first svg { margin-top: 14px; }
.tab-first .x { margin-left: 14px; }
.tab-second { width: 299px; padding-left: 6px; border-left: 1px solid #8c9196; }
.tab-second .blank { width: 260px; height: 24px; margin-right: 6px; }
.tab-active { width: 299px; background: #fff; padding: 0 12px 0 15px; gap: 9px; }
.favicon { width: 20px; height: 20px; border-radius: 4px; background: #f94b60; color: #fff; font-size: 13px; line-height: 19px; text-align: center; }
.tab-title { flex: 1; font-size: 15px; }
.tab-last { width: 299px; padding: 9px 13px 0 10px; justify-content: space-between; }
.tab-last .blank { width: 178px; height: 33px; }
.tab-last .x { margin-bottom: 9px; }
.glass { flex: 1; display: flex; align-items: center; padding: 0 3px 0 11px; background: linear-gradient(90deg, #14253a, #18293f 75%, #3c4a5e 85%, #2b323c); }
.glow { flex: 1; align-self: flex-end; height: 30px; margin: 0 72px 0 -20px; background: linear-gradient(#aebdc9, #b9c6d0 60%, #d2dfee); filter: blur(3px); }
.round { position: relative; z-index: 1; width: 35px; height: 35px; border-radius: 50%; background: #e7eaed; display: grid; place-items: center; }
.window-buttons { display: flex; align-self: flex-start; height: 26px; margin-left: 10px; border: 1px solid #8b95a1; border-top: 0; border-radius: 0 0 5px 5px; }
.window-buttons button { width: 38px; background: none; display: grid; place-items: center; border-right: 1px solid #8b95a1; }
.window-buttons button:last-child { width: 62px; border: 0; }
.toolbar { display: flex; align-items: center; height: 87px; padding: 5px 24px 45px 17px; gap: 20px; border-bottom: 2px solid #dadce0; }
.omnibox { flex: 1; display: flex; align-items: center; height: 35px; margin-left: -2px; margin-right: -3px; padding: 0 13px 0 16px; gap: 15px; border-radius: 18px; background: #f1f3f4; }
.url { flex: 1; padding-bottom: 2px; font-weight: 350; }
.url span { color: #5f6368; }

.viewport { position: relative; display: flex; align-items: flex-start; }
.page { flex: 1; min-width: 0; max-width: 1475px; margin: 0 auto; padding: 20px 25px 0; }
.bar { position: relative; width: 21px; background: #f0f0f0; }
.bar b { display: block; margin: 0 2px; background: #c1c1c1; }
.bar i { position: absolute; left: 6px; border: 5px solid transparent; }
.bar .up { top: 4px; border-bottom-color: #a3a3a3; }
.bar .down { bottom: 4px; border-top-color: #505050; }
.page-bar { height: 885px; padding-top: 21px; }
.page-bar b { height: 280px; }
.edge { position: absolute; }
.edge-left { left: 0; top: 877px; width: 2px; height: 22px; background: #ccc; }
.edge-right { right: 0; top: 904px; width: 5px; height: 46px; background: #2b3442; }

.logo { display: flex; align-items: flex-start; justify-content: center; gap: 16px; height: 128px; font-size: 58px; font-weight: 300; line-height: 124px; color: #e61e28; }
.account { display: flex; justify-content: flex-end; gap: 17px; margin-top: 47px; font-weight: 500; }
.account a { display: flex; align-items: center; gap: 4px; }
.menu { display: flex; height: 67px; margin-top: 15px; background: #f4f4f4; font-weight: 500; }
.menu a { display: flex; align-items: center; padding: 0 38px 2px; white-space: nowrap; }
.menu .pink { background: #ff1464; color: #fff; }
.menu .green { background: #adff2f; color: navy; }

.search { position: relative; display: flex; width: 980px; height: 62px; margin: 50px auto 25px; }
.search input { flex: 1; border: 1px solid #a9a9a9; border-radius: 4px; }
.search button { width: 133px; padding-bottom: 2px; background: #000; color: #fff; border-radius: 0 4px 4px 0; }
.search-note { position: absolute; left: 22px; top: 0; height: 60px; display: flex; align-items: center; gap: 24px; }
.scribble { width: 190px; height: 30px; }
.note { color: #ed1c24; font-weight: 700; font-size: 43px; line-height: 50px; white-space: nowrap; }
.search-note .note { padding-bottom: 2px; }

.result { border-top: 1px solid #ddd; padding-top: 40px; text-align: center; font-weight: 300; }
.result h2 { display: flex; justify-content: center; gap: 9px; font-size: 24px; line-height: 32px; font-weight: 350; }
.result h2 .scribble { margin-right: 10px; }
.result p { margin-top: 47px; font-size: 18px; }
.result strong { color: red; font-weight: 700; }
.result button { width: 269px; height: 44px; margin-top: 20px; border-radius: 3px; background: #fb1a43; color: #fff; font-weight: 300; }

.location { position: relative; margin: 34px -11px 0 11px; }
.location::before { content: ""; display: block; height: 2px; margin: 0 -11px 0 -12px; background: #dadce0; }
.location h3 { padding-top: 9px; font-weight: 500; }
.location-note { position: absolute; left: 219px; top: 5px; }
.location table { width: 100%; height: 51px; margin-top: 8px; border-collapse: collapse; table-layout: fixed; }
.location th, .location td { border: 1px solid #ddd; padding: 0 0 2px; }
.location th { width: 10%; background: #f4f4f4; font-weight: 500; }

.map { position: relative; margin-top: 20px; }
.map-art { width: 100%; height: auto; font-size: 14px; text-anchor: middle; }
.map-art use, .geo path { stroke-linejoin: round; }
.map-art text { paint-order: stroke; stroke: #fff; stroke-width: 2px; stroke-linejoin: round; }
#minor-roads path, #main-roads path, #ramps path, #expressway path, .path-green path, .yl, .h47, .h47-case, .h47-mid, .bridge, .bridge-case { fill: none; vector-effect: non-scaling-stroke; }
.minor-case { stroke: #bdbbb7; stroke-width: 5; }
.minor-fill { stroke: #fff; stroke-width: 3; }
.main-case { stroke: #bdbbb7; stroke-width: 13; }
.main-fill { stroke: #fff; stroke-width: 11; }
.ramp-case { stroke: #b96a2d; stroke-width: 6; }
.ramp-fill { stroke: #ffa34d; stroke-width: 4; }
.exp-case { stroke: #b96a2d; stroke-width: 33; }
.exp-fill { stroke: #ffa34d; stroke-width: 31; }
.exp-line { stroke: #c46f2b; stroke-width: 1; }
.path-green path { stroke: #d9ecd4; stroke-width: 3; }
.yl { stroke: #fffac8; }
.w7 { stroke-width: 7; } .w10 { stroke-width: 10; } .w14 { stroke-width: 14; } .w28 { stroke-width: 28; }
.h47-case { stroke: #c99a2e; stroke-width: 28; }
.h47 { stroke: #ffcf4f; stroke-width: 26; }
.h47-mid { stroke: #ffe070; stroke-width: 10; }
.bridge-case { stroke: #b8a36c; stroke-width: 21; }
.bridge { stroke: #dfca96; stroke-width: 19; }
.line7 { stroke: #dfb896; }
.district { font-size: 36px; font-weight: 300; fill: #8d8a88; opacity: .6; }
.apt { fill: #594632; }
.poi, .scale { fill: #333; }
.strong { font-weight: 700; font-size: 15px; }
.park { fill: #4d6b4d; }
.blue { fill: #345d80; }
.indigo { fill: #404c9c; }
.zone { font-size: 15px; fill: #967874; font-style: italic; }
.roadname { font-size: 13px; fill: #7d4a18; }
.map-art .roadname text, .map-art .badge text, .map-art .scale text, .map-art .district text { stroke: none; }
.line2 { fill: #00a512; }
.line7-name { fill: #6d7a22; }
.badge { font-size: 11px; }
.scale { font-size: 12px; font-weight: 500; }
.kakao { font-size: 15px; }
.map-type { position: absolute; top: 4px; right: 4px; display: flex; width: 137px; height: 45px; padding: 2px; background: #fff; border-radius: 3px; box-shadow: 0 1px 2px #0004; font-size: 15px; }
.map-type button { flex: 1; padding-bottom: 2px; background: none; white-space: nowrap; }
.map-type .on { flex: 0 0 54px; background: #3396ff; color: #fff; font-weight: 700; border-radius: 3px; }
.map-zoom { position: absolute; top: 52px; right: 4px; width: 40px; height: 233px; display: flex; flex-direction: column; align-items: center; border-radius: 3px; background: #fffc; box-shadow: 0 1px 2px #0004; }
.map-zoom button { width: 40px; height: 39px; display: grid; place-items: center; background: #fff; }
.map-zoom input { flex: 1; min-height: 0; width: 20px; margin: 10px 0 9px; appearance: none; writing-mode: vertical-lr; direction: rtl; background: linear-gradient(#ccc 24%, #3396ff 24%) center / 4px 100% no-repeat; }
.map-zoom input::-webkit-slider-thumb { appearance: none; width: 20px; height: 8px; border-radius: 2px; background: #3396ff; }

.history { position: relative; display: flex; height: 768px; margin: 38px -8px 0 8px; border: 1px solid #ddd; background: #f4f4f4; }
.log { flex: 1; min-width: 0; overflow: hidden; padding: 25px 24px 0 25px; }
.log-text { font-weight: 300; white-space: nowrap; }
.rule { font-weight: 400; }
.ad { position: relative; margin-top: 2px; padding: 24px 160px 23px; border: 1px solid #e6e6e6; background: #f2f2f2; }
.adchoices { position: absolute; right: 0; top: 0; }
.speck { position: absolute; left: 17px; top: 68px; width: 8px; height: 8px; background: #fff; }
.card { height: 300px; padding: 33px 60px 0; border-radius: 6px; background: #fff; box-shadow: 0 1px 3px #0006; }
.card h4 { font-size: 33px; line-height: 40px; font-weight: 300; color: #333; }
.brand { margin-top: 12px; font-size: 20px; line-height: 28px; color: #444; }
.desc { margin-top: 15px; font-weight: 300; font-size: 20px; color: #555; white-space: nowrap; }
.card-foot { display: flex; justify-content: space-between; align-items: center; margin-top: 79px; color: #999; }
.card-foot button { width: 311px; height: 45px; border-radius: 4px; background: #08f; color: #fff; font-size: 20px; box-shadow: 0 6px 10px #0004; }
.entry { display: flex; align-items: center; height: 51px; padding-top: 22px; font-size: 18px; font-weight: 300; white-space: nowrap; }
.entry span:first-child { margin-right: 15px; }
.masked { display: grid; place-items: center; width: 180px; height: 38px; margin: 0 7px 0 18px; background: #fff; }
.masked .scribble { width: 168px; }
.entry + .ad { margin-top: 0; }
.log-bar { padding-top: 21px; }
.log-bar b { height: 312px; }
.highlight { position: absolute; left: -7px; top: 410px; width: 634px; height: 100px; border: 8px solid #ed1c24; }
.arrow { position: absolute; left: 159px; top: 246px; width: 300px; height: 206px; color: #ed1c24; font-weight: 700; font-size: 34px; line-height: 59px; text-align: center; }
.arrow svg { position: absolute; inset: 0; z-index: 0; }
.arrow p { position: relative; }
.arrow p:nth-of-type(1) { padding-top: 32px; }
.callout { position: absolute; left: 638px; top: 424px; width: 654px; height: 72px; padding: 0 7px; background: #fff; color: #ed1c24; font-weight: 700; font-size: 43px; line-height: 70px; white-space: nowrap; }
.callout p:first-child { margin-top: -20px; }

footer { display: flex; justify-content: space-between; height: 53px; margin: 25px -8px 24px 8px; font-weight: 300; border-bottom: 2px solid #f3f3f3; }
footer button { width: 52px; height: 37px; border-radius: 4px; background: #3f51b5; color: #fff; font-size: 15px; }
```
